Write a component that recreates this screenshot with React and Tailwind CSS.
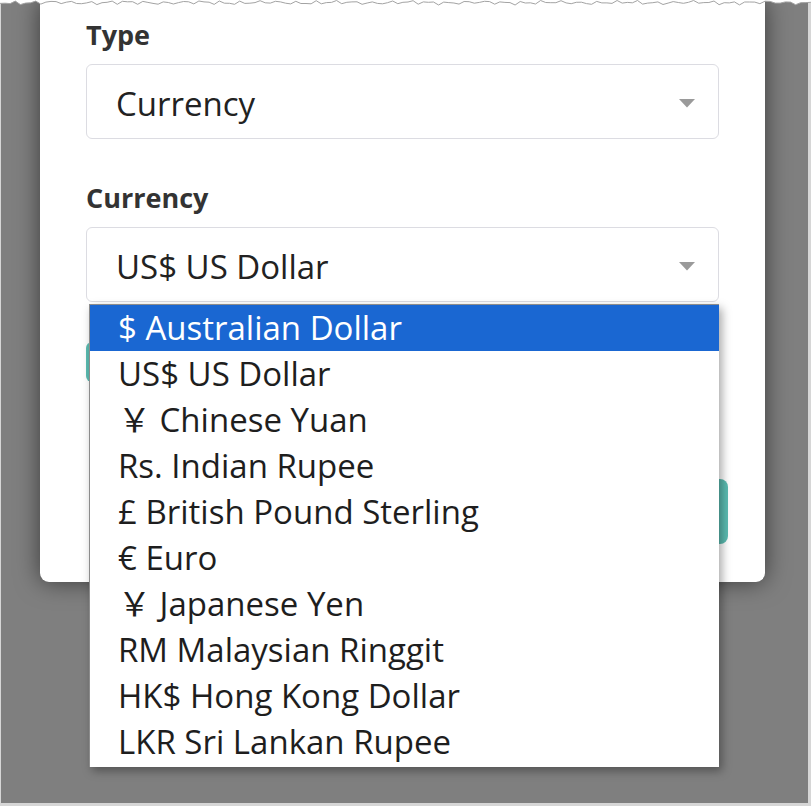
import React from "react";

const options = [
  "$ Australian Dollar",
  "US$ US Dollar",
  "￥ Chinese Yuan",
  "Rs. Indian Rupee",
  "£ British Pound Sterling",
  "€ Euro",
  "￥ Japanese Yen",
  "RM Malaysian Ringgit",
  "HK$ Hong Kong Dollar",
  "LKR Sri Lankan Rupee",
];

function Caret() {
  return (
    <svg width="16" height="9" viewBox="0 0 16 9" className="shrink-0">
      <polygon points="0,0 16,0 8,8.5" fill="#9a9a9a" />
    </svg>
  );
}

function TornEdge() {
  const pts = [];
  for (let i = 0; i <= 160; i++) {
    const x = i * 5.1;
    const y =
      2.6 +
      1.2 * Math.sin(i * 1.7) +
      0.9 * Math.sin(i * 3.3 + 1) +
      0.5 * Math.sin(i * 0.45);
    pts.push([x, Math.max(0.5, Math.min(5.5, y))]);
  }
  const line = pts.map((p, i) => `${i ? "L" : "M"}${p[0].toFixed(1)},${p[1].toFixed(1)}`).join(" ");
  const fill = `M0,0 ${line.replace("M", "L")} L811,0 Z`;
  return (
    <svg width="811" height="8" viewBox="0 0 811 8" className="absolute left-0 top-0">
      <path d={fill} fill="#ffffff" />
      <path d={line} fill="none" stroke="#a3a3a3" strokeWidth="1" />
    </svg>
  );
}

function Select({ value }) {
  return (
    <div className="flex h-[75px] w-full items-center justify-between rounded-[6px] border border-[#dcdce2] bg-white pl-[29px] pr-[23px] pt-[3px]">
      <span className="text-[33px] text-[#222] leading-none">{value}</span>
      <Caret />
    </div>
  );
}

export default function App() {
  return (
    <div
      className="relative h-[806px] w-[811px] overflow-hidden bg-white"
      style={{ fontFamily: "'Open Sans', 'Noto Sans CJK JP', sans-serif" }}
    >
      <div className="h-full w-full overflow-hidden border-b-[3px] border-l border-r-[3px] border-[#d6d6d6] bg-[#7f7f7f]">
        <div className="ml-[39px] w-[725px] rounded-b-[9px] bg-white px-[46px] pb-[38px] pt-[17px] shadow-[0_0_24px_rgba(0,0,0,0.55)]">
          <div className="text-[27px] font-bold leading-[36px] text-[#333]">Type</div>
          <div className="mt-[11px]">
            <Select value="Currency" />
          </div>
          <div className="mt-[41px] text-[27px] font-bold leading-[36px] text-[#333]">Currency</div>
          <div className="relative mt-[11px]">
            <Select value="US$ US Dollar" />
            <div className="absolute left-[3px] top-[calc(100%+2px)] z-10 w-[630px] border-l border-t border-[#8c8c8c] bg-white pb-[2px] shadow-[3px_4px_9px_rgba(0,0,0,0.35)]">
              {options.map((o, i) => (
                <div
                  key={o}
                  className={`h-[46px] whitespace-nowrap pl-[28px] text-[33px] leading-[46px] ${
                    i === 0 ? "bg-[#1a67d2] text-white" : "text-[#1e1e1e]"
                  }`}
                >
                  {o}
                </div>
              ))}
            </div>
          </div>
          <div className="mt-[40px] h-[40px] w-[220px] rounded-[6px] bg-[#5bbcb1]" />
          <div className="-mr-[9px] mt-[97px] flex justify-end">
            <div className="h-[65px] w-[200px] rounded-[8px] bg-[#5bbcb1]" />
          </div>
        </div>
      </div>
      <TornEdge />
    </div>
  );
}
